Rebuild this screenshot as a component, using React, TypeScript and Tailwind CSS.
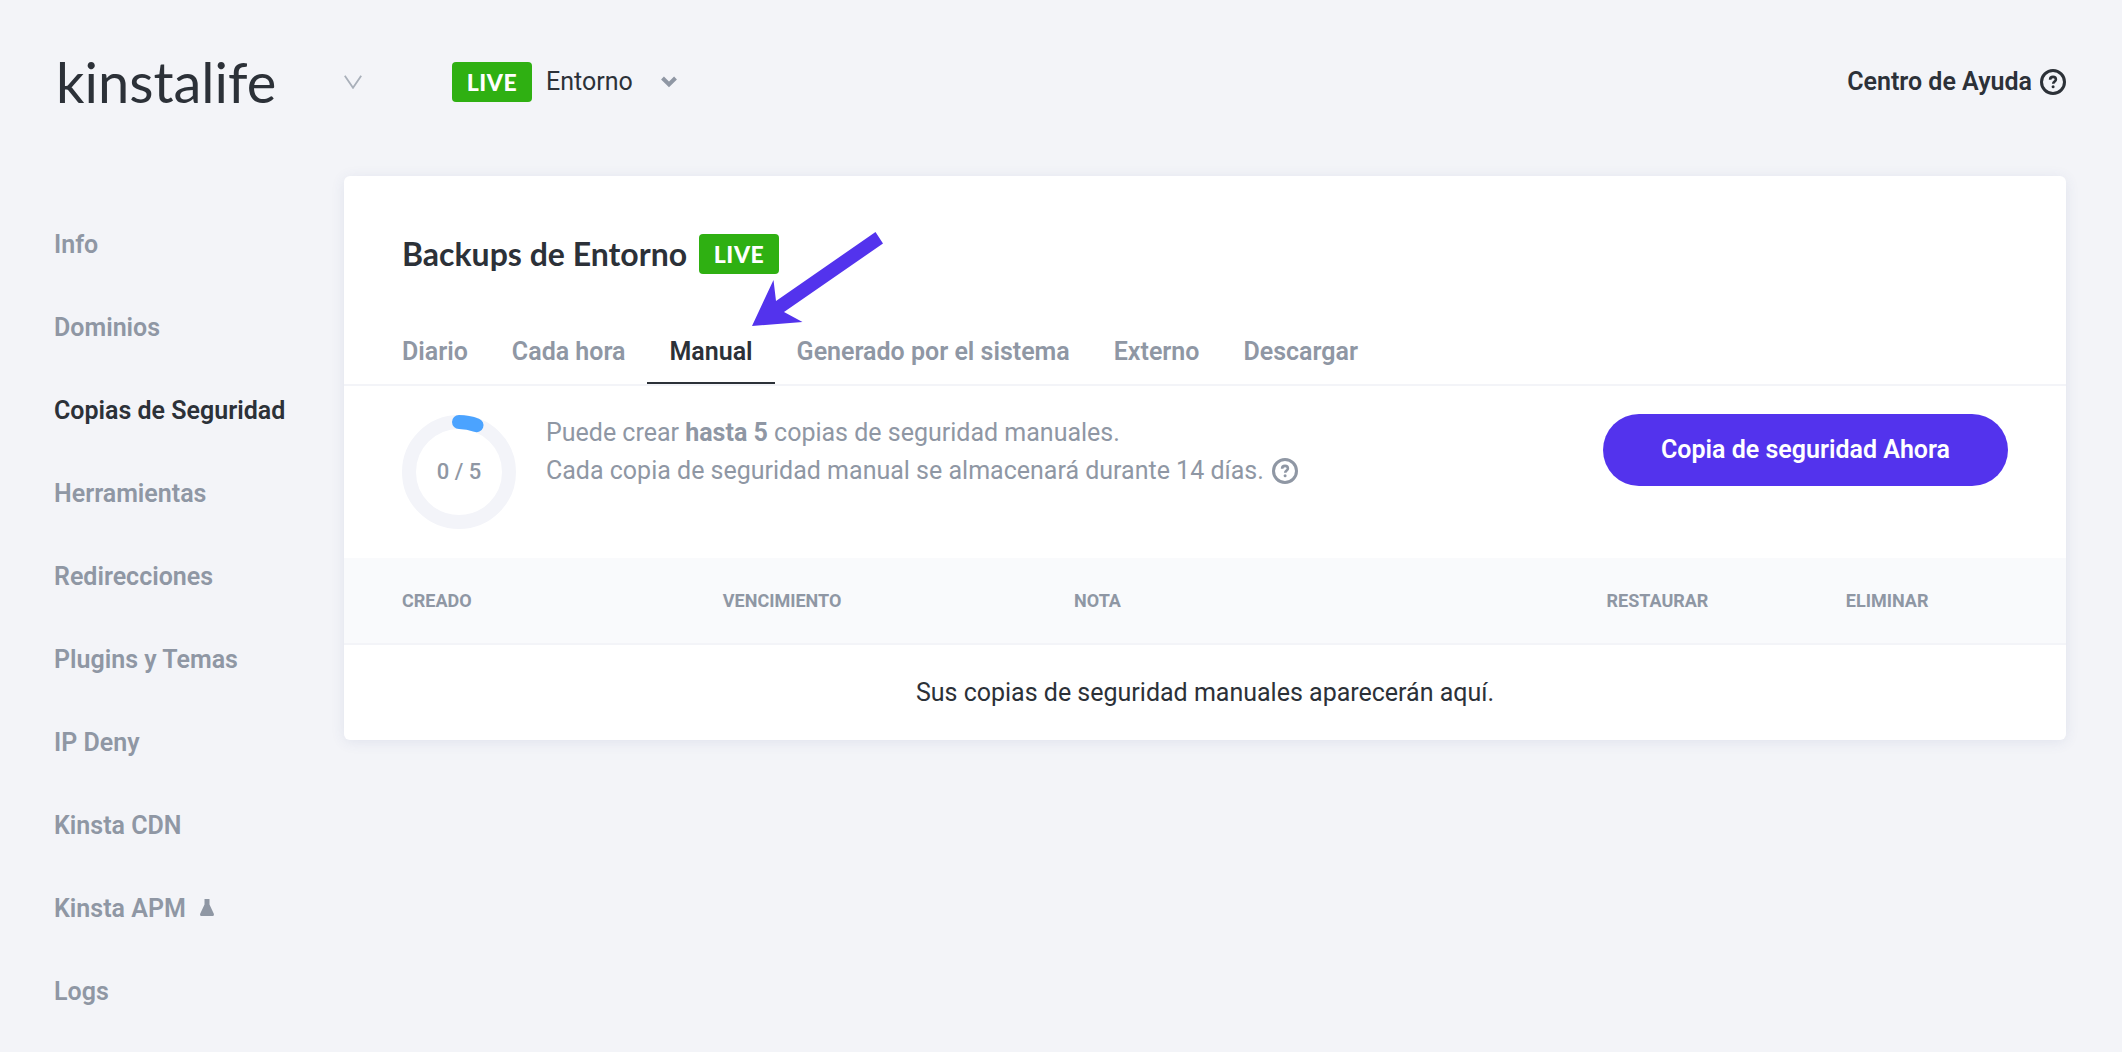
import React, { useState } from 'react';
import clsx from 'clsx';

interface NavItem {
  label: string;
  beta?: boolean;
}

const navItems: NavItem[] = [
  { label: 'Info' },
  { label: 'Dominios' },
  { label: 'Copias de Seguridad' },
  { label: 'Herramientas' },
  { label: 'Redirecciones' },
  { label: 'Plugins y Temas' },
  { label: 'IP Deny' },
  { label: 'Kinsta CDN' },
  { label: 'Kinsta APM', beta: true },
  { label: 'Logs' },
];

const tabs = ['Diario', 'Cada hora', 'Manual', 'Generado por el sistema', 'Externo', 'Descargar'];

const columns = [
  { label: 'Creado', className: 'w-[22%] pl-[58px]' },
  { label: 'Vencimiento', className: 'w-[20.4%]' },
  { label: 'Nota', className: 'w-[30.8%]' },
  { label: 'Restaurar', className: 'w-[13.9%] pl-0.5' },
  { label: 'Eliminar', className: 'pl-0.5' },
];

const HelpIcon = ({ className }: { className?: string }) => (
  <svg viewBox="0 0 26 26" fill="none" stroke="currentColor" className={clsx('h-[26px] w-[26px] shrink-0', className)}>
    <circle cx="13" cy="13" r="11.5" strokeWidth="3" />
    <path d="M10.1 10.7c0-1.800 1.200-2.800 2.900-2.800s2.900 1 2.900 2.600c0 1.900-2.700 2.100-2.700 4.300" strokeWidth="2.600" />
    <circle cx="13.100" cy="17.800" r="1.500" fill="currentColor" stroke="none" />
  </svg>
);

const FlaskIcon = () => (
  <svg viewBox="0 0 14 17" fill="currentColor" className="mb-0.5 h-[17px] w-[14px]">
    <path d="M4.500 0h5v5.500l4.200 8.900c.6 1.300 0 2.600-1.400 2.600H1.700C.3 17-.3 15.700.3 14.400L4.500 5.500z" />
  </svg>
);

const LiveBadge = () => (
  <span className="flex h-10 w-20 items-center justify-center rounded bg-[#2fb012] font-['Lato',sans-serif] text-[23px] leading-6 font-black tracking-wide text-white">
    LIVE
  </span>
);

// Ring that shows how many manual backups are in use
const UsageRing = ({ used, total }: { used: number; total: number }) => (
  <div className="grid h-[116px] w-[114px] shrink-0 place-items-center">
    <svg viewBox="0 0 114 114" fill="none" strokeWidth="14" className="col-start-1 row-start-1 h-full w-full">
      <circle cx="57" cy="57" r="50" stroke="#f3f4f9" />
      <path d="M57 7A50 50 0 0 1 74.500 10.200" stroke="#4ba3ff" strokeLinecap="round" />
    </svg>
    <span className="col-start-1 row-start-1 text-[22px] leading-6 font-medium">
      {used} / {total}
    </span>
  </div>
);

const Header = () => (
  <header className="flex h-[176px] items-start justify-between px-14">
    <div className="flex items-center pt-[42px]">
      <div className="grid w-[396px] items-center">
        <select
          aria-label="Sitio"
          className="col-start-1 row-start-1 h-20 w-[308px] appearance-none bg-transparent font-['Lato',sans-serif] text-[56px] leading-[80px] outline-none"
        >
          <option>kinstalife</option>
        </select>
        <svg
          viewBox="0 0 18 14"
          fill="none"
          stroke="#a9b0ba"
          strokeWidth="1.800"
          className="pointer-events-none col-start-1 row-start-1 ml-72 h-[14px] w-[18px]"
        >
          <path d="M.8.8 9 12.800 17.200.8" />
        </svg>
      </div>
      <label className="flex items-center">
        <LiveBadge />
        <span className="grid items-center">
          <select className="col-start-1 row-start-1 ml-[14px] h-10 w-36 appearance-none bg-transparent text-[25px] leading-10 outline-none">
            <option>Entorno</option>
          </select>
          <svg
            viewBox="0 0 16 12"
            fill="none"
            stroke="#8f97a4"
            strokeWidth="4"
            className="pointer-events-none col-start-1 row-start-1 ml-[129px] h-3 w-4"
          >
            <path d="M1.500 2 8 8.500 14.500 2" />
          </svg>
        </span>
      </label>
    </div>
    <a href="#ayuda" className="flex items-center gap-2 pt-[62px] text-[25px] leading-10 font-semibold">
      Centro de Ayuda
      <HelpIcon />
    </a>
  </header>
);

const Sidebar = () => {
  const [current, setCurrent] = useState('Copias de Seguridad');

  return (
    <nav className="w-[292px] shrink-0 pt-[27px] pl-0.5">
      <ul>
        {navItems.map(({ label, beta }) => (
          <li key={label}>
            <a
              href="#"
              onClick={() => setCurrent(label)}
              className={clsx(
                'flex items-center gap-[14px] text-[25px] leading-[83px] font-semibold',
                label === current ? 'text-[#2c3138]' : 'text-[#8f97a4]'
              )}
            >
              {label}
              {beta && <FlaskIcon />}
            </a>
          </li>
        ))}
      </ul>
    </nav>
  );
};

export default function App() {
  const [activeTab, setActiveTab] = useState('Manual');

  return (
    <div className="min-h-screen bg-[#f3f4f8] font-['Roboto',sans-serif] text-[#2c3138]">
      <Header />
      <div className="flex items-start pr-14 pl-[52px]">
        <Sidebar />
        <main className="min-w-0 flex-1 rounded-md bg-white shadow-[0_2px_14px_rgba(60,80,140,0.1)]">
          <div className="relative flex items-center gap-3 px-[58px] pt-[58px]">
            <h1 className="font-['Lato',sans-serif] text-[32px] leading-10 font-bold">Backups de Entorno</h1>
            <LiveBadge />
            <svg viewBox="0 0 132 94" fill="#5333ed" className="absolute top-14 left-[408px] h-[94px] w-[132px]">
              <path d="M0 94 21.500 48 24 69 123.500 0 131 11.500 32 80 50.500 90z" />
            </svg>
          </div>

          <div role="tablist" className="mt-[50px] flex border-b-2 border-[#f3f4f8] px-9">
            {tabs.map((tab) => (
              <button
                key={tab}
                role="tab"
                aria-selected={tab === activeTab}
                onClick={() => setActiveTab(tab)}
                className={clsx(
                  'h-[60px] border-b-2 px-[22px] pb-0.5 text-[25px] leading-10 font-semibold',
                  tab === activeTab ? 'border-[#2c3138] text-[#2c3138]' : 'border-transparent text-[#8f97a4]'
                )}
              >
                {tab}
              </button>
            ))}
          </div>

          <div className="flex items-start px-[58px] py-7 text-[#8f97a4]">
            <UsageRing used={0} total={5} />
            <div className="ml-[30px] flex-1 text-[25px] leading-[38px]">
              <p>
                Puede crear <strong className="font-bold">hasta 5</strong> copias de seguridad manuales.
              </p>
              <p className="flex items-center gap-2">
                Cada copia de seguridad manual se almacenará durante 14 días.
                <HelpIcon />
              </p>
            </div>
            <button className="h-[72px] rounded-full bg-[#5333ed] px-[58px] text-[25px] font-semibold text-white">
              Copia de seguridad Ahora
            </button>
          </div>

          <table className="w-full table-fixed">
            <thead>
              <tr className="h-[86px] border-b-2 border-[#f3f4f8] bg-[#f9fafc] text-left text-[18px] text-[#8f97a4] uppercase">
                {columns.map(({ label, className }) => (
                  <th key={label} className={clsx('font-bold', className)}>
                    {label}
                  </th>
                ))}
              </tr>
            </thead>
            <tbody>
              <tr className="h-24">
                <td colSpan={5} className="text-center text-[25px]">
                  Sus copias de seguridad manuales aparecerán aquí.
                </td>
              </tr>
            </tbody>
          </table>
        </main>
      </div>
    </div>
  );
}
